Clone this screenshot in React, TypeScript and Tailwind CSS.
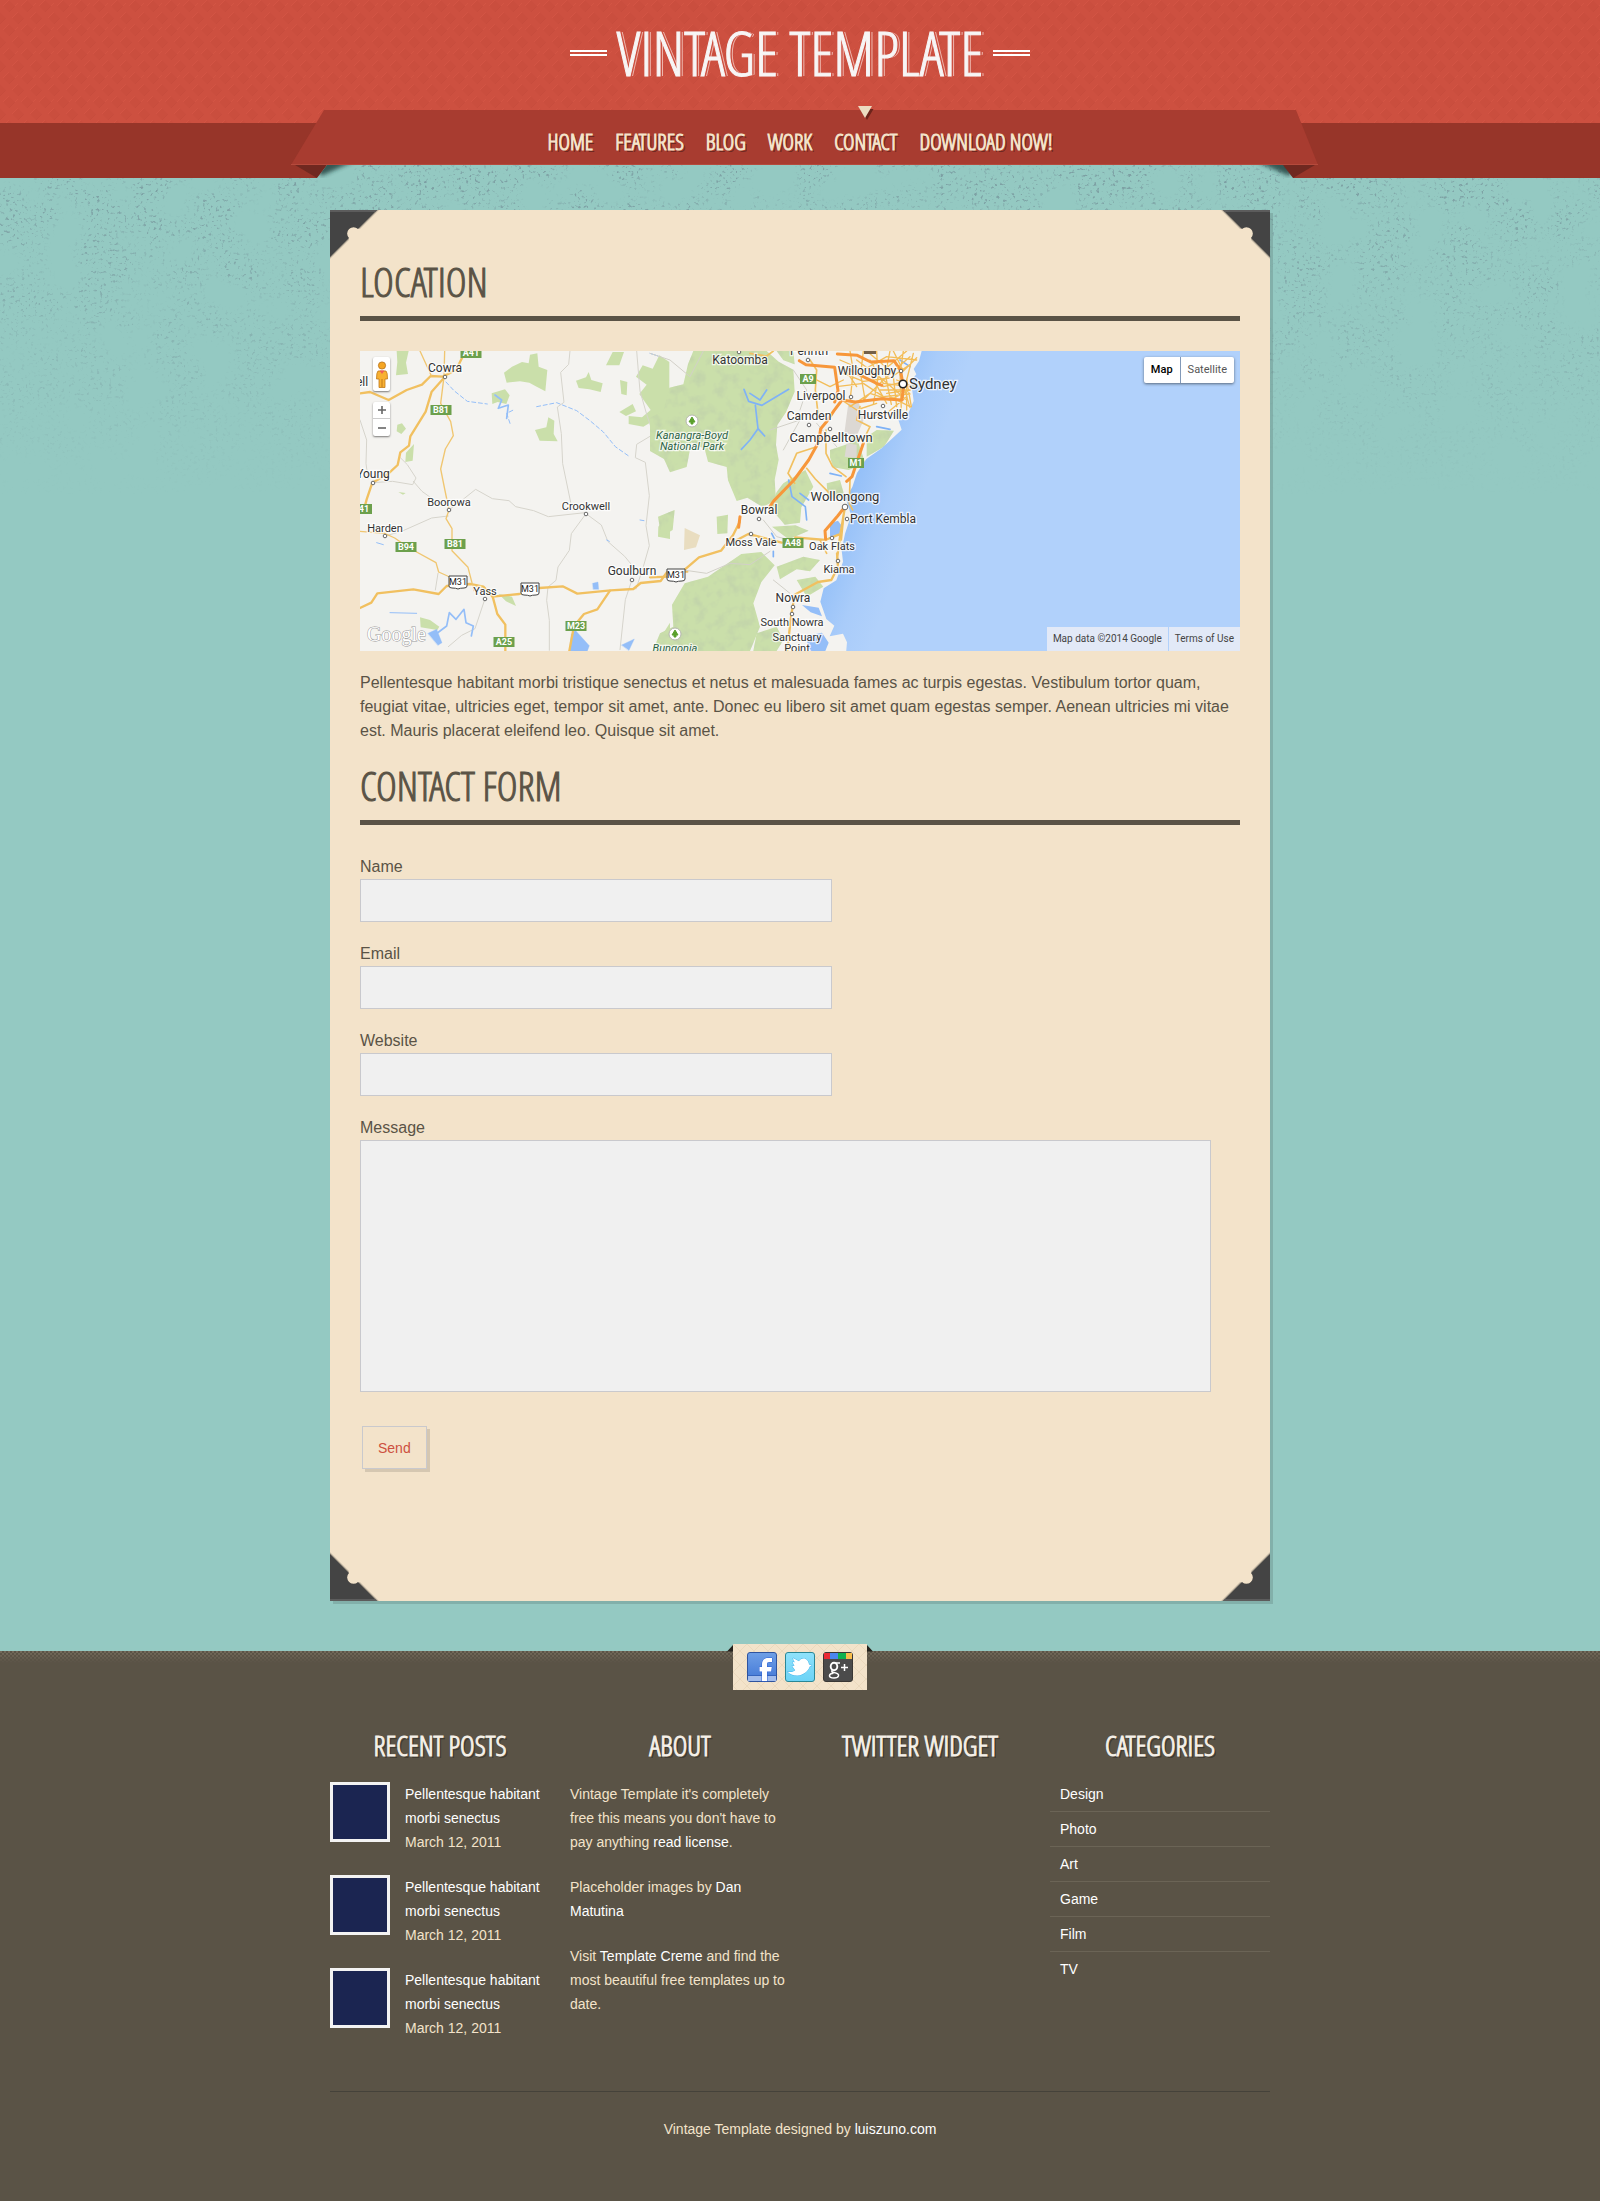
import React from "react";

const NAV = ["Home", "Features", "Blog", "Work", "Contact", "Download now!"];
const FIELDS = [
  { id: "name", label: "Name", type: "text" },
  { id: "email", label: "Email", type: "email" },
  { id: "website", label: "Website", type: "url" },
];
const CATEGORIES = ["Design", "Photo", "Art", "Game", "Film", "TV"];

type Label = { t: string; x: number; y: number; s?: number; left?: boolean; park?: boolean };

const LABELS: Label[] = [
  { t: "Cowra", x: 85, y: 21 },
  { t: "ell", x: 2, y: 35 },
  { t: "Young", x: 13, y: 127 },
  { t: "Boorowa", x: 89, y: 155, s: 11 },
  { t: "Crookwell", x: 226, y: 159, s: 11 },
  { t: "Harden", x: 25, y: 181, s: 11 },
  { t: "Yass", x: 125, y: 244, s: 11 },
  { t: "Goulburn", x: 272, y: 224 },
  { t: "Katoomba", x: 380, y: 13 },
  { t: "Penrith", x: 449, y: 4 },
  { t: "Willoughby", x: 507, y: 24, s: 12 },
  { t: "Sydney", x: 549, y: 38, s: 15, left: true },
  { t: "Liverpool", x: 461, y: 49 },
  { t: "Camden", x: 449, y: 69, s: 12 },
  { t: "Hurstville", x: 523, y: 68, s: 12 },
  { t: "Campbelltown", x: 471, y: 91, s: 13 },
  { t: "Kanangra-Boyd", x: 332, y: 88, s: 11, park: true },
  { t: "National Park", x: 332, y: 99, s: 11, park: true },
  { t: "Wollongong", x: 485, y: 150, s: 13 },
  { t: "Port Kembla", x: 490, y: 172, s: 12, left: true },
  { t: "Bowral", x: 399, y: 163 },
  { t: "Moss Vale", x: 391, y: 195, s: 11 },
  { t: "Oak Flats", x: 472, y: 199, s: 11 },
  { t: "Kiama", x: 479, y: 222, s: 11 },
  { t: "Nowra", x: 433, y: 251 },
  { t: "South Nowra", x: 432, y: 275, s: 11 },
  { t: "Sanctuary", x: 437, y: 290, s: 11 },
  { t: "Point", x: 437, y: 301, s: 11 },
  { t: "Bungonia", x: 315, y: 301, s: 11, park: true },
];

const DOTS: [number, number, number][] = [
  [85, 26, 2], [13, 132, 2], [89, 159, 2], [226, 163, 2], [25, 185, 2], [125, 248, 2], [272, 229, 2],
  [379, 1, 2], [448, 9, 2], [541, 20, 2], [543, 33, 4], [491, 46, 2], [449, 74, 2], [523, 55, 2],
  [470, 78, 2], [485, 156, 3], [487, 168, 2], [399, 168, 2], [391, 183, 2], [472, 187, 2],
  [478, 210, 2], [433, 256, 2], [432, 263, 2],
];

const BADGES: [string, number, number, number][] = [
  ["A41", 111, 2, 21], ["B81", 81, 59, 21], ["41", 4, 158, 16], ["B94", 46, 196, 21], ["B81", 95, 193, 21],
  ["M23", 216, 275, 21], ["A25", 144, 291, 21], ["A9", 448, 28, 16], ["M1", 496, 112, 16], ["A48", 433, 192, 21],
];

const SHIELDS: [number, number][] = [[98, 231], [170, 238], [316, 224]];

function MapDrawing() {
  return (
    <svg className="block h-full w-full" viewBox="0 0 880 300" preserveAspectRatio="xMinYMin slice" role="img" aria-label="Map of the coast around Sydney">
      <defs>
        <linearGradient id="sea" gradientUnits="userSpaceOnUse" x1="530" y1="560" x2="760" y2="640">
          <stop offset="0" stopColor="#8ebcf7" />
          <stop offset=".6" stopColor="#a9ccfa" />
          <stop offset="1" stopColor="#b1d1fb" />
        </linearGradient>
        <filter id="relief" x="0" y="0" width="1" height="1">
          <feTurbulence type="fractalNoise" baseFrequency="0.03" numOctaves="3" seed="4" />
          <feColorMatrix values="0 0 0 0 .5  0 0 0 0 .6  0 0 0 0 .4  1.6 0 0 0 -.75" />
          <feComposite in2="SourceGraphic" operator="in" result="n" />
          <feMerge><feMergeNode in="SourceGraphic" /><feMergeNode in="n" /></feMerge>
        </filter>
      </defs>
      <rect width="880" height="300" fill="#f4f3f0" />

      <g transform="translate(-10 -11) scale(.33333)" strokeLinejoin="round" strokeLinecap="round">
        <g fill="#cadfaa">
          <path d="M140 33h36l-8 35 6 34-36 4 4-40zM142 254l14-4 12 16-14 16-14-8zM168 338l24-26-4 50-22 4zM145 456l22 3-8 5z" />
          <path d="M462 98l24-18 30-14 20 4 4-26 22-4 4 40 26 10-6 64-26-14-22-12-28-4-40 4zM425 160l40-12 14 18-10 26-26-6-16 6z" />
          <path d="M555 270l34-8 6-30 18 10-2 40 12 22-54-2zM678 122l30-10 8-16 8 24 34 10-6 26-34-8-32-4zM768 76l20-40h34l-14 40zM810 120l22 6-2 40-16-4zM808 216l40-24 10 22-30 14z" />
          <path d="M858 110l20-34 30 10 20-40 30 20v200l-48-24-30 18-44-8v-24l40 4 26-22-34-48 22-28zM925 560l35-45v82l-36-7zM906 933l54-85v85zM210 832l30 8 28 20-6 10-50-8zM446 762l40 8 12 28-30-14z" />
        </g>
        <g fill="none" stroke="#d6d4cc" strokeWidth="3">
          <path d="M660 33l-4 40-24 24 10 90-20 14 12 80 4 90 24 116M708 521l-44 60-6 50-34 50-6 40-24 20-4 40 8 60v90M708 521l46 34 20 50 50 44 28 34" />
          <path d="M297 510l40-30 40-32 50 28 50 6 20 18 54 12 44 18 110-12M68 428l60-4 60 10 10-20-26-40-20-20M190 424l26 30 50 36M105 588l50-14 90-40 50-6M30 240l20 60-2 70 6 46M405 776l-30 90-40 20-40 34M264 700l-8 50" />
          <path d="M860 33l10 120 20 70 20 60-50 30-4 40 30 14 12 100-10 90 10 60-20 70-20 60M846 719l-20 60-16 150" />
        </g>
        <g fill="none" stroke="#94bef8" strokeWidth="5">
          <path d="M288 126l24 26 40 32 60 8M480 250l-10-30 20-10M560 200l60-12 60 24 40 30 40 34 36 44 40 28" strokeDasharray="12 8" strokeWidth="3" />
          <path d="M435 165l20 15-10 25 30-10-5 40M250 888l40-30 8-40 20 20 24-30 6 40 22 10-6 30" />
          <path d="M120 818l80 2M80 608l20 6" strokeWidth="3" />
          <path d="M658 933l6-50 12-12 42 46-6 16zM815 915l38-18-16 34zM728 730l16-4 2 22h-16zM234 880l26-12 16 40-12 8z" fill="#94bef8" strokeWidth="1" />
          <path d="M870 540l12 2M770 600l8 4M900 40l24 8" strokeWidth="3" />
        </g>
        <g fill="none" stroke="#f1c060" strokeWidth="7">
          <path d="M285 110l-40 45-18 60-46 74-4 28-26 20-8 38-28 26-48 27-17 50-8 30M30 160l30-4 56 24 54-30 46-16 26-26 36 2 40-20 30-60" />
          <path d="M30 804l34-16 18-28 108-12 76 14 24-24 70-6 40 8 28 30 80-8 60-18 70-5 44 22 100-10 68-4 22-18 60-6 20-28h60" />
          <path d="M428 770l14 52 24 32v79M780 752l-38 56-40 14-30 36-14 75" />
        </g>
        <g fill="none" stroke="#f0c670" strokeWidth="4">
          <path d="M284 33l-2 77-10 80 30 55 8 42-24 40-14 60 12 60 13 63-9 26 18 30v66l48 50 18 70M210 33l34 74M30 574l74 6 30 14 44 30 80 44 8 28 40 18" />
        </g>
      </g>

      <g transform="translate(290 -11) scale(.33333)" strokeLinejoin="round" strokeLinecap="round">
        <g fill="#cadfaa" filter="url(#relief)">
          <path d="M130 33h220l36 32 44 24 4 66-26 62-26 38-4 60 8 44-12 60 4 62-40 20-46-28-32 10-26-62-4-40-56-16-10-38-40-20-14 74-50 16-18-40-42-24v-100l40-20 18-70 42-10 14-60z" />
          <path d="M380 33h50l4 40-34-12zM400 430l66-40 24 50-36 62-4 46-46 6-44-52 20-46zM540 330l60-20 12-40 34 100-50 20-46-8-10-30zM650 290l30-20 52 2-30 48-52 30zM530 430l40-10 14 50-50 8z" />
          <path d="M104 730l70-20 100-68 60-6 40 40-40 50-24 64 20 70-30 73H8l22-53 40-20-4-66zM24 530l50-20-6 60-34 20zM200 530l34-6-2 56-30 2zM366 560l70-4 40 16-60 26zM380 680l80-30 50 10-30 34-40-6-50 30z" />
          <path d="M320 880l60-20 20 40-20 33h-70zM440 720l56-10 24 30-50 30z" />
        </g>
        <path d="M104 564l46 22-12 36-36 8z" fill="#e9ddc0" />
        <path d="M595 190h32l14 50-20 46-38-6zM590 310l30 4v40l-36-4z" fill="#dcd8d3" />
        <path d="M815 33l-8 30-16 24 8 16-16 20 8 60-20 46-26 10 10 30-60 56-46 32-28 42-14 42-20 34 10 30 6 22-18 54-10 50 4 34-20 56-38 24-10 40 18 52 24 20-14 32 40-8 12 26-4 46h1226V33z" fill="url(#sea)" />
        <path d="M540 550l24-8 10 14-6 30-28 2zM466 888l50-10 20 30-10 25h-46zM456 795l50 8 10 26-34-12z" fill="#94bef8" />
        <g fill="none" stroke="#7fb2f6" strokeWidth="5">
          <path d="M282 148l14 36 40 12 80-48M316 196l8 70-24 34-26 28M324 266l20 22M300 160l30 20 20-30M416 420l10 50 40 30 4 40M450 460l26 20M540 400l34 8M365 580l10 20M370 650v-16M680 260l40 8M780 80l-30-20" />
        </g>
        <g fill="none" stroke="#d2d0c8" strokeWidth="3">
          <path d="M0 40l60 20 60 50 40-77M340 540l40 50 40 10M100 690l70 10 70-30 60 4 60-40M370 720l50 40M400 330l50-90-90 30M430 90l40 60-20 60M500 250l60 70" />
        </g>
        <g fill="none" stroke="#f1c060" strokeWidth="5">
          <path d="M480 60l20 30-4 60 8 70M300 40l50 8 20-15M528 270v70l20 40 40 30M500 320l-60 20-26 60 20 30M470 385l26 32 40 40M640 300l20-40-40-20 10-40M600 420l-2 70 10 20" />
          <path d="M0 712l56-2M105 688l42-36 66-20 36-46 20-40M245 608l50-26 100 26M436 592l90 8 40-16M585 500l-15 90-8 60 2 30-20 40-40 6-70 38-10 60-14 120" strokeWidth="7" />
          <path d="M580 540l-6 60M560 640l4 40M530 640l-20-40" />
        </g>
        <g fill="none" stroke="#f3bd58" strokeWidth="4">
          <path d="M570 60l70 30 70-40 90 10M580 100l60 24 80-10 60-40M560 140l80-10 60 40 80-8M600 33l10 60-10 90M640 33l-8 70 14 80M680 33l4 80-14 80M720 33l-14 70 18 90M760 33l-10 70 30 100M790 40l-20 80 14 80M600 200l60-40 60 20 60-30M620 60l80 60 70 60M640 180l60-60 80-70M660 230l50-10 60-50M690 150l80 0M700 130l80 10M720 170l60 30M730 33l30 60 40-40M740 120l50 20M480 110l60 30 40-20M650 33l60 50 60-50" />
          <path d="M700 140l60-14M710 160l70-10M730 110l10 90M750 100l4 110M770 120l0 90M660 60l40 70M560 170l60 40 60-20M580 80l40 60M660 100l50 90" />
        </g>
        <g fill="none" stroke="#f7973b" strokeWidth="9">
          <path d="M448 62l20 12 86 8 10 70-10 34M562 42l60 4 40 20 70-4 20 30 8 50-4 38-60-4-80 10-40-6-24 32-20 30-20 24-6 40-30 54-44 60-60 62-14 20M270 530l-4 32M600 90l80 40 16 6" />
          <path d="M640 310l-34 100-16 14M585 500l-22 28-38 44 2 26" />
        </g>
      </g>

      {DOTS.map(([x, y, r]) => (
        <circle key={`${x}-${y}`} cx={x} cy={y} r={r - 0.2} fill="#fff" stroke={r > 3 ? "#222" : "#666"} strokeWidth={r > 3 ? 1.6 : 1} />
      ))}
      {[[332, 70], [315, 283]].map(([x, y]) => (
        <g key={x}>
          <circle cx={x} cy={y} r="6" fill="#fff" stroke="#b7b7b0" />
          <path d={`M${x} ${y - 4}l3 5h-2v2h-2v-2h-2z`} fill="#5aa02c" stroke="#5aa02c" strokeLinejoin="round" />
        </g>
      ))}
      {BADGES.map(([t, x, y, w], i) => (
        <g key={i}>
          <rect x={x - w / 2} y={y - 5} width={w} height="10" fill="#6ca04c" />
          <text x={x} y={y + 3} textAnchor="middle" className="fill-white font-['Roboto',sans-serif] text-[9px] font-bold">{t}</text>
        </g>
      ))}
      <rect x="504" y="0" width="12" height="3" fill="#736049" />
      {SHIELDS.map(([x, y]) => (
        <g key={x}>
          <path d={`M${x - 9} ${y - 6}h18v10q0 2-3 2-4 0-6 1-2-1-6-1-3 0-3-2z`} fill="#fff" stroke="#444" />
          <text x={x} y={y + 3} textAnchor="middle" className="fill-[#222] font-['Roboto',sans-serif] text-[9px]">M31</text>
        </g>
      ))}
      {LABELS.map((l) => (
        <text
          key={l.t}
          x={l.x}
          y={l.y}
          fontSize={l.s ?? 12}
          textAnchor={l.left ? "start" : "middle"}
          fill={l.park ? "#2d6346" : "#333"}
          stroke="#fff"
          strokeOpacity=".75"
          strokeWidth="2.5"
          paintOrder="stroke"
          fontStyle={l.park ? "italic" : "normal"}
          className="font-['Roboto',sans-serif]"
        >
          {l.t}
        </text>
      ))}
      <text x="7" y="290" className="fill-white stroke-[#999] font-['Liberation_Serif',serif] text-[20px] [paint-order:stroke]" strokeWidth="1">Google</text>
    </svg>
  );
}

function Corner({ className }: { className: string }) {
  return (
    <svg className={`absolute h-[50px] w-[50px] ${className}`} viewBox="0 0 50 50" aria-hidden="true">
      <path d="M0 0H49L30 19A5.5 5.5 0 1 0 19 30L0 49Z" fill="#000" opacity=".15" />
      <path d="M0 0H48L29 19A5.5 5.5 0 1 0 19 29L0 48Z" fill="#000" opacity=".2" />
      <path d="M0 0H47L28 19A5.5 5.5 0 1 0 19 28L0 47Z" fill="#444" />
      <path d="M0 0H47L45 2H0Z" fill="#5c5c5c" />
    </svg>
  );
}

function Ribbon() {
  return (
    <svg className="absolute -top-[13px] left-1/2 -ml-[509px] h-[72px] w-[1030px]" viewBox="0 0 1030 72" aria-hidden="true">
      <defs>
        <filter id="soft" x="-20%" y="-100%" width="140%" height="300%"><feGaussianBlur stdDeviation="2" /></filter>
        <clipPath id="under"><path d="M36 55H993L1003 68H26Z" /></clipPath>
      </defs>
      <g clipPath="url(#under)">
        <path d="M20 48H70L50 57L30 66ZM1008 48H958L978 57L998 66Z" fill="#1c3a38" opacity=".8" filter="url(#soft)" />
      </g>
      <path d="M4 55H36L26 68ZM992 55H1024L1002 68Z" fill="#702820" />
      <path d="M33 0H1005L1027 55H0Z" fill="#a83c30" />
      <path d="M0 54.5H1027" stroke="#b54a3c" />
    </svg>
  );
}

function Speckles() {
  return (
    <svg className="pointer-events-none absolute inset-x-0 top-[165px] h-[330px] w-full [mask-image:linear-gradient(#000,rgba(0,0,0,.4)_60%,transparent)]" aria-hidden="true">
      <filter id="specks" x="0" y="0" width="100%" height="100%">
        <feTurbulence type="fractalNoise" baseFrequency="0.32" numOctaves="2" seed="11" result="fine" />
        <feColorMatrix in="fine" values="0 0 0 0 .2  0 0 0 0 .34  0 0 0 0 .36  6 0 0 0 -3.6" result="dots" />
        <feTurbulence type="fractalNoise" baseFrequency="0.025" numOctaves="2" seed="5" result="coarse" />
        <feColorMatrix in="coarse" values="0 0 0 0 0  0 0 0 0 0  0 0 0 0 0  0 4 0 0 -1.4" result="patch" />
        <feComposite in="dots" in2="patch" operator="in" />
      </filter>
      <rect width="100%" height="100%" filter="url(#specks)" />
    </svg>
  );
}

function DiamondTexture() {
  return (
    <svg className="absolute inset-0 h-full w-full" aria-hidden="true">
      <defs>
        <pattern id="diamonds" width="18" height="24" patternUnits="userSpaceOnUse">
          <path d="M9 0L15 6L9 12L3 6ZM0 12L6 18L0 24ZM18 12L12 18L18 24Z" fill="#b8402f" opacity=".1" />
          <path d="M3 6L9 0M12 18L18 12M15 6L21 0M-6 18L0 12" stroke="#e0604c" strokeWidth="1" opacity=".3" />
          <path d="M9 12L15 6M0 24L6 18" stroke="#a93a2e" strokeWidth="1" opacity=".15" />
        </pattern>
      </defs>
      <rect width="100%" height="100%" fill="url(#diamonds)" />
    </svg>
  );
}

function FacebookIcon() {
  return (
    <svg viewBox="0 0 30 30" className="h-[30px] w-[30px]" aria-hidden="true">
      <defs><linearGradient id="fb" x2="0" y2="1"><stop stopColor="#6f9fe6" /><stop offset="1" stopColor="#4177d6" /></linearGradient></defs>
      <rect x=".5" y=".5" width="29" height="29" rx="2.5" fill="url(#fb)" stroke="#2f549f" />
      <path d="M1 24h28v5H1z" fill="#a3bdec" />
      <path d="M1 23.5h28" stroke="#3564bd" />
      <path d="M15 29V19.500h-2.500V15H15v-2.500C15 8.500 17 6 21 6h4v4h-2.800c-1.800 0-2.200.8-2.200 2.300V15h4.800l-.7 4.500H20V29z" fill="#fff" stroke="#2f62d8" strokeWidth="1" paintOrder="stroke" />
    </svg>
  );
}

function TwitterIcon() {
  return (
    <svg viewBox="0 0 30 30" className="h-[30px] w-[30px]" aria-hidden="true">
      <defs><linearGradient id="tw" x2="0" y2="1"><stop stopColor="#8fe2fb" /><stop offset="1" stopColor="#6bd3f6" /></linearGradient></defs>
      <rect x=".5" y=".5" width="29" height="29" rx="2.5" fill="url(#tw)" stroke="#2a8796" />
      <path d="M27 13.500l-3-1c-.5-3.500-2.500-6-5.500-6-2 0-3.500 1-4.500 2.800L8 6c.3 2 1 3.200 2 4.300L7.500 10l2 4-2.500-.2 3.200 4.500c-2 1.800-4.500 2.200-8 1.200 3 3 6.500 4.300 10.500 4 6-.5 10.500-4.500 12-9z" fill="#fff" stroke="#40b4ee" strokeWidth="1" strokeLinejoin="round" paintOrder="stroke" />
    </svg>
  );
}

function GooglePlusIcon() {
  return (
    <svg viewBox="0 0 30 30" className="h-[30px] w-[30px]" aria-hidden="true">
      <rect x=".5" y=".5" width="29" height="29" rx="2.5" fill="#4b4b4b" stroke="#3a3734" />
      <path d="M1 1h6v6H1z" fill="#ea2a33" />
      <path d="M7 1h8v6H7z" fill="#4b86ee" />
      <path d="M15 1h8v6h-8z" fill="#0fb04f" />
      <path d="M23 1h6v6h-6z" fill="#f8bd4b" />
      <g fill="none" stroke="#fff">
        <ellipse cx="11" cy="14.500" rx="3.300" ry="3.700" strokeWidth="1.900" />
        <path d="M12.500 11h4.500M9.500 18c-1.500 1-.6 2.200 1.500 2.600 3.400.7 5 1.500 4.500 3.300-.5 1.700-2.300 2.200-4.500 2.200-3 0-4.700-1-4.500-2.600.2-1.400 1.800-2.200 4-2.300" strokeWidth="1.500" />
        <path d="M21.500 12v7M18 15.500h7" strokeWidth="1.500" />
      </g>
    </svg>
  );
}

function SectionTitle({ children }: { children: React.ReactNode }) {
  return (
    <h2 className="border-b-[5px] border-[#5a5346] pb-[14px] font-['Open_Sans_Condensed_Light','Roboto_Condensed',sans-serif] text-[40px] leading-10 text-[#5a5346] uppercase [-webkit-text-stroke:1px_#5a5346]">
      {children}
    </h2>
  );
}

function FooterColumn({ title, children }: { title: string; children?: React.ReactNode }) {
  return (
    <section className="flex-1">
      <h3 className="pb-4 text-center font-['Open_Sans_Condensed_Light','Roboto_Condensed',sans-serif] text-[28px] leading-[28px] text-[#f5f0e8] uppercase [-webkit-text-stroke:1px_#f5f0e8] [text-shadow:2px_2px_0_rgba(0,0,0,.3)]">
        {title}
      </h3>
      {children}
    </section>
  );
}

const inputClass = "block border border-[#c9c9cd] bg-[#f0f0f0] px-3 outline-none";

export default function App() {
  return (
    <div className="relative min-h-screen bg-[#94c9c2] font-['Liberation_Sans',Arial,sans-serif] text-[#5a5346]">
      <Speckles />

      <header className="relative">
        <div className="relative h-[123px] bg-[#cd5040]">
          <DiamondTexture />
          <a href="#home" className="relative flex items-center justify-center gap-[10px] pt-[19px] text-[#f7f5f5]">
            <span className="h-[6px] w-[37px] border-y-2 border-white" />
            <span className="font-['Open_Sans_Condensed_Light','Roboto_Condensed',sans-serif] text-[60px] leading-[68px] [-webkit-text-stroke:1px_#f7f5f5] [text-shadow:2px_0_0_#cd5040,3px_0_0_#eeb5ac]">VINTAGE TEMPLATE</span>
            <span className="h-[6px] w-[37px] border-y-2 border-white" />
          </a>
        </div>
        <div className="relative">
          <div className="flex h-[55px] justify-between">
            <div className="w-[calc(50%-483px)] bg-[#973529]" />
            <div className="w-[calc(50%-493px)] bg-[#973529]" />
          </div>
          <Ribbon />
          <nav className="absolute inset-x-0 top-0">
            <ul className="flex justify-center gap-[22px]">
              {NAV.map((item) => (
                <li key={item} className="relative">
                  {item === "Contact" && (
                    <svg className="absolute -top-[17px] left-1/2 -ml-2 h-4 w-4" viewBox="0 0 16 16" aria-hidden="true">
                      <path d="M3 3h12.500L9 14z" fill="#6d241b" />
                      <path d="M0 0h14L7 12z" fill="#ecdcc1" />
                    </svg>
                  )}
                  <a href={`#${item.toLowerCase().replace(/\W+/g, "-")}`} className="block py-[6px] font-['Open_Sans_Condensed_Light','Roboto_Condensed',sans-serif] text-[22px] leading-6 text-[#f3e3ca] uppercase [-webkit-text-stroke:1px_#f3e3ca] [text-shadow:2px_2px_0_rgba(0,0,0,.35)]">
                    {item}
                  </a>
                </li>
              ))}
            </ul>
          </nav>
        </div>
      </header>

      <main className="relative mx-auto mt-8 max-w-[940px] bg-[#f3e3ca] px-[30px] pt-[52px] pb-[132px] shadow-[3px_3px_0_rgba(0,0,0,.12)]">
        <Corner className="top-0 left-0" />
        <Corner className="top-0 right-0 -scale-x-100" />
        <Corner className="bottom-0 left-0 -scale-y-100" />
        <Corner className="right-0 bottom-0 -scale-100" />

        <SectionTitle>Location</SectionTitle>
        <div className="relative mt-[30px] h-[300px] overflow-hidden font-['Roboto',sans-serif]">
          <MapDrawing />
          <div className="absolute top-[6px] left-[13px] flex flex-col gap-[11px]">
            <button type="button" aria-label="Street View" className="flex h-[34px] w-[17px] items-center justify-center rounded-[2px] bg-white shadow-[0_1px_2px_rgba(0,0,0,.5)]">
              <svg viewBox="0 0 12 27" className="h-[27px] w-[12px]" aria-hidden="true">
                <path d="M2 10h8q1.500 1 1.500 8H9v8.500H3V18H.5Q.5 11 2 10z" fill="#f8b133" stroke="#c07a1c" strokeWidth=".8" />
                <path d="M6 18v8" stroke="#c07a1c" />
                <circle cx="6" cy="4.500" r="3.600" fill="#f5a623" stroke="#b5701a" strokeWidth=".8" />
                <path d="M3.500 9.500h5L6 13z" fill="#ef5b5b" />
              </svg>
            </button>
            <div className="flex w-[17px] flex-col divide-y divide-[#ccc] rounded-[2px] bg-white shadow-[0_1px_2px_rgba(0,0,0,.5)]">
              <button type="button" aria-label="Zoom in" className="flex h-[17px] items-center justify-center">
                <svg viewBox="0 0 8 8" className="h-2 w-2" aria-hidden="true"><path d="M4 0v8M0 4h8" stroke="#666" strokeWidth="1.600" /></svg>
              </button>
              <button type="button" aria-label="Zoom out" className="flex h-[17px] items-center justify-center">
                <svg viewBox="0 0 8 8" className="h-2 w-2" aria-hidden="true"><path d="M0 4h8" stroke="#666" strokeWidth="1.600" /></svg>
              </button>
            </div>
          </div>
          <div className="absolute top-[6px] right-[6px] flex h-[26px] divide-x divide-[#8299b8] rounded-[2px] bg-white text-[11px] shadow-[0_1px_3px_rgba(0,0,0,.5)]">
            <button type="button" className="px-[7px] font-medium text-black">Map</button>
            <button type="button" className="px-[7px] text-[#555]">Satellite</button>
          </div>
          <div className="absolute right-0 bottom-0 flex gap-px text-[10px] leading-6 text-[#444]">
            <span className="bg-[#e2e9f7] px-[6px]">Map data ©2014 Google</span>
            <a href="#terms" className="bg-[#e2e9f7] px-[6px]">Terms of Use</a>
          </div>
        </div>
        <p className="mt-5 mb-[23px] text-base">
          Pellentesque habitant morbi tristique senectus et netus et malesuada fames ac turpis egestas. Vestibulum tortor quam, feugiat vitae, ultricies eget, tempor sit amet, ante. Donec eu libero sit amet quam egestas semper. Aenean ultricies mi vitae est. Mauris placerat eleifend leo. Quisque sit amet.
        </p>

        <SectionTitle>Contact form</SectionTitle>
        <form className="mt-[30px] flex flex-col gap-5" onSubmit={(e) => e.preventDefault()}>
          {FIELDS.map((f) => (
            <div key={f.id}>
              <label htmlFor={f.id} className="block leading-6">{f.label}</label>
              <input id={f.id} type={f.type} className={`${inputClass} h-[43px] w-full max-w-[472px]`} />
            </div>
          ))}
          <div>
            <label htmlFor="message" className="block leading-6">Message</label>
            <textarea id="message" className={`${inputClass} h-[252px] w-full max-w-[851px] resize-none`} />
          </div>
          <button type="submit" className="mt-[14px] ml-[2px] h-[43px] self-start border border-[#c9c9cd] bg-[#f3e3ca] px-[15px] text-sm text-[#cd5040] shadow-[3px_3px_0_rgba(0,0,0,.12)]">
            Send
          </button>
        </form>
      </main>

      <footer className="relative mt-[50px] bg-[#5a5346] pb-[60px] text-sm leading-6 text-[#f3e3ca]">
        <svg className="absolute inset-x-0 top-0 h-3 w-full [mask-image:linear-gradient(#000,transparent)]" aria-hidden="true">
          <defs>
            <pattern id="weave" width="4" height="4" patternUnits="userSpaceOnUse">
              <path d="M0 0h2v2H0zM2 2h2v2H2z" fill="#857a69" opacity=".65" />
            </pattern>
          </defs>
          <rect width="100%" height="100%" fill="url(#weave)" />
        </svg>

        <div className="relative mx-auto h-[46px] w-[134px] -translate-y-[7px] bg-[#f3e3ca]">
          <svg className="absolute top-0 -left-[6px] h-[8px] w-[146px]" viewBox="0 0 146 8" aria-hidden="true">
            <path d="M0 7.500L6 1v6.500zM146 7.500L140 1v6.500z" fill="#25221d" />
          </svg>
          <svg className="absolute inset-0 h-full w-full" aria-hidden="true">
            <defs>
              <pattern id="lattice" width="14" height="14" patternUnits="userSpaceOnUse">
                <path d="M0 0l14 14M14 0L0 14" stroke="#ebd9bd" strokeWidth="1" />
              </pattern>
            </defs>
            <rect width="100%" height="100%" fill="url(#lattice)" />
          </svg>
          <div className="relative flex justify-center gap-2 pt-2">
            <a href="#facebook" aria-label="Facebook"><FacebookIcon /></a>
            <a href="#twitter" aria-label="Twitter"><TwitterIcon /></a>
            <a href="#google-plus" aria-label="Google Plus"><GooglePlusIcon /></a>
          </div>
        </div>

        <div className="mx-auto max-w-[940px]">
          <div className="flex min-h-[352px] gap-5 pt-[34px]">
            <FooterColumn title="Recent posts">
              <ul className="flex flex-col gap-[21px] pt-[7px]">
                {[1, 2, 3].map((n) => (
                  <li key={n} className="flex gap-[15px]">
                    <a href={`#post-${n}`} aria-label="Post thumbnail" className="h-[60px] w-[60px] shrink-0 border-[3px] border-[#f3f3f3] bg-[#1b2551]" />
                    <div>
                      <a href={`#post-${n}`} className="block text-white">Pellentesque habitant morbi senectus</a>
                      <span className="block">March 12, 2011</span>
                    </div>
                  </li>
                ))}
              </ul>
            </FooterColumn>
            <FooterColumn title="About">
              <div className="flex flex-col gap-[21px] pt-[7px]">
                <p>Vintage Template it's completely free this means you don't have to pay anything <a href="#license" className="text-white">read license</a>.</p>
                <p>Placeholder images by <a href="#dan" className="text-white">Dan Matutina</a></p>
                <p>Visit <a href="#creme" className="text-white">Template Creme</a> and find the most beautiful free templates up to date.</p>
              </div>
            </FooterColumn>
            <FooterColumn title="Twitter widget" />
            <FooterColumn title="Categories">
              <ul className="divide-y divide-[#6b6456] pt-[2px]">
                {CATEGORIES.map((c) => (
                  <li key={c}><a href={`#${c.toLowerCase()}`} className="block px-[10px] py-[5px] text-white">{c}</a></li>
                ))}
              </ul>
            </FooterColumn>
          </div>
          <p className="mt-[42px] border-t border-[#45423a] pt-[25px] text-center">
            Vintage Template designed by <a href="#luiszuno" className="text-white">luiszuno.com</a>
          </p>
        </div>
      </footer>
    </div>
  );
}
